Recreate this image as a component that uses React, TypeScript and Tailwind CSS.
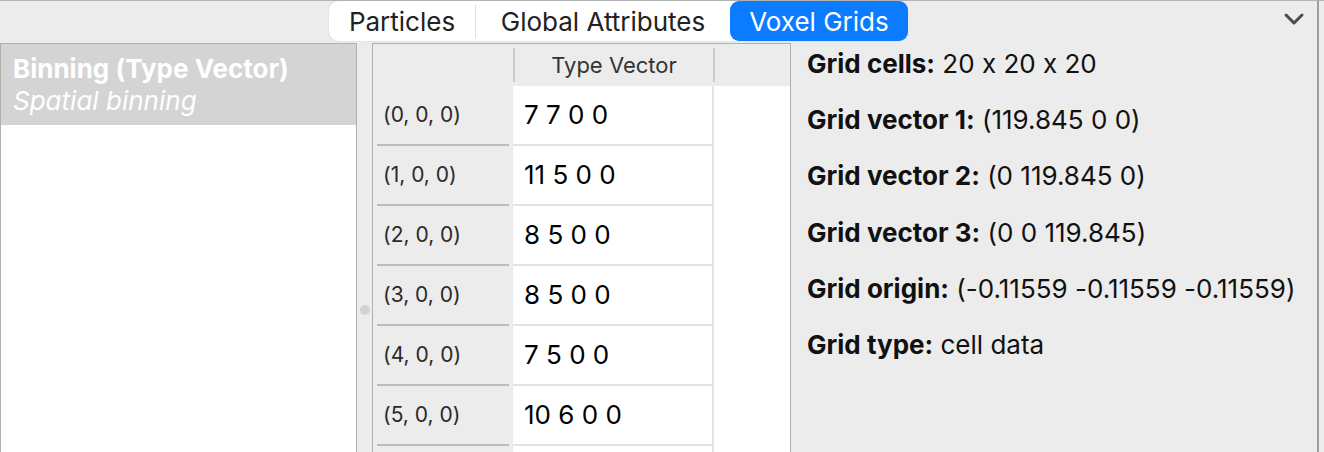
import { ChevronDown } from 'lucide-react';

const rows = [
  { idx: '(0, 0, 0)', val: '7 7 0 0' },
  { idx: '(1, 0, 0)', val: '11 5 0 0' },
  { idx: '(2, 0, 0)', val: '8 5 0 0' },
  { idx: '(3, 0, 0)', val: '8 5 0 0' },
  { idx: '(4, 0, 0)', val: '7 5 0 0' },
  { idx: '(5, 0, 0)', val: '10 6 0 0' },
  { idx: '', val: '' },
];

const info = [
  { label: 'Grid cells:', value: '20 x 20 x 20' },
  { label: 'Grid vector 1:', value: '(119.845 0 0)' },
  { label: 'Grid vector 2:', value: '(0 119.845 0)' },
  { label: 'Grid vector 3:', value: '(0 0 119.845)' },
  { label: 'Grid origin:', value: '(-0.11559 -0.11559 -0.11559)' },
  { label: 'Grid type:', value: 'cell data' },
];

export default function App() {
  return (
    <div className="w-[1324px] h-[452px] overflow-hidden flex bg-[#ececec] border-t border-[#b3b3b3] font-['Inter',sans-serif] [font-feature-settings:'calt'_0] text-[#1a1a1a]">
      <div className="w-[1319px] h-full flex flex-col border-r-2 border-[#9e9e9e]">
        {/* tab bar */}
        <div className="h-[42px] flex items-start pl-[329px] pr-[7px]">
          <div className="h-[40px] flex bg-white rounded-[9px] shadow-[0_0_1px_rgba(0,0,0,0.25)] text-[26px]">
            <div className="w-[146px] flex items-center justify-center text-[#222]">Particles</div>
            <div className="w-px my-[3px] bg-[#e2e2e2]" />
            <div className="w-[254px] flex items-center justify-center text-[#222]">Global Attributes</div>
            <div className="w-[178px] flex items-center justify-center bg-[#0b7bff] text-white rounded-[9px]">Voxel Grids</div>
          </div>
          <ChevronDown className="ml-auto mt-[2px] text-[#4a4a4a]" size={32} strokeWidth={2.2} />
        </div>

        {/* body */}
        <div className="flex-1 flex min-h-0">
          {/* list */}
          <div className="w-[357px] bg-white border-t border-l border-r border-[#b0b0b0]">
            <div className="h-[81px] bg-[#d4d4d4] px-[12px] pt-[9px] text-white text-[26px] leading-[32px]">
              <div className="font-bold">Binning (Type Vector)</div>
              <div className="italic">Spatial binning</div>
            </div>
          </div>

          {/* splitter */}
          <div className="w-[15px] flex flex-col items-center pt-[262px]">
            <div className="w-[10px] h-[10px] rounded-full bg-[#d2d2d2]" />
          </div>

          {/* table */}
          <div className="w-[419px] flex flex-col border-t border-l border-r border-[#b0b0b0] bg-white">
            <div className="h-[42px] flex bg-[#ececec] shrink-0">
              <div className="w-[140px]" />
              <div className="w-[2px] my-[4px] bg-[#cbcbcb]" />
              <div className="w-[198px] flex items-center justify-center text-[22px] text-[#333]">Type Vector</div>
              <div className="w-[2px] my-[4px] bg-[#cbcbcb]" />
              <div className="flex-1" />
            </div>
            {rows.map((r, i) => (
              <div key={i} className="h-[60px] flex shrink-0">
                <div className="w-[140px] bg-[#ececec] flex flex-col">
                  <div className="flex-1 flex items-center pl-[10px] pb-[1px] text-[21px] text-[#2a2a2a]">{r.idx}</div>
                  <div className="h-[2px] mx-[4px] bg-[#bdbdbd]" />
                </div>
                <div className="w-[199px] flex items-center pl-[11px] pb-[1px] border-b-2 border-[#e3e3e3] text-[26px] text-black">{r.val}</div>
                <div className="w-[2px] bg-[#e3e3e3]" />
                <div className="flex-1" />
              </div>
            ))}
          </div>

          {/* info */}
          <div className="flex-1 pl-[16px] pt-[5px] flex flex-col gap-[25.2px] text-[26px] leading-[31px] text-[#111]">
            {info.map((i) => (
              <div key={i.label} className="whitespace-nowrap">
                <span className="font-bold">{i.label}</span> {i.value}
              </div>
            ))}
          </div>
        </div>
      </div>
      <div className="flex-1" />
    </div>
  );
}
